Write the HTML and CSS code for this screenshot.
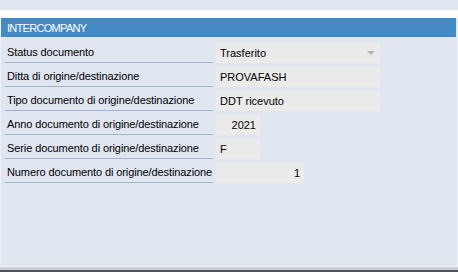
FILE: index.html
```html
<!DOCTYPE html>
<html lang="it">

<head>
    <meta charset="UTF-8">
    <meta name="viewport" content="width=device-width, initial-scale=1.0">
    <title>Intercompany</title>
    <link rel="stylesheet" href="styles.css">
</head>

<body>
    <div class="barra-top"></div>

    <div class="pannello">
        <div class="intestazione">INTERCOMPANY</div>

        <div class="campi">
            <div class="riga">
                <div class="etichetta">Status documento</div>
                <div class="valore lungo combo">
                    <span>Trasferito</span>
                    <span class="freccia"></span>
                </div>
            </div>
            <div class="riga">
                <div class="etichetta">Ditta di origine/destinazione</div>
                <div class="valore lungo">PROVAFASH</div>
            </div>
            <div class="riga">
                <div class="etichetta">Tipo documento di origine/destinazione</div>
                <div class="valore lungo">DDT ricevuto</div>
            </div>
            <div class="riga">
                <div class="etichetta">Anno documento di origine/destinazione</div>
                <div class="valore corto numero">2021</div>
            </div>
            <div class="riga">
                <div class="etichetta">Serie documento di origine/destinazione</div>
                <div class="valore corto">F</div>
            </div>
            <div class="riga">
                <div class="etichetta">Numero documento di origine/destinazione</div>
                <div class="valore medio numero">1</div>
            </div>
        </div>
    </div>

    <div class="barra-bottom"></div>
</body>

</html>
```

FILE: styles.css
```css
html,
body {
    height: 100%;
}

body {
    margin: 0;
    padding: 0;
    font-family: Tahoma, "Liberation Sans", Arial, sans-serif;
    font-size: 11px;
    background-color: #dfe6f0;
    display: flex;
    flex-direction: column;
    color: #000;
}

.barra-top {
    height: 10px;
    background-color: #dfe6f0;
    border-bottom: 8px solid #ffffff;
    flex-shrink: 0;
}

.pannello {
    flex: 1;
    display: flex;
    flex-direction: column;
    background-color: #dfe6f0;
    border-left: 1px solid #eef2f8;
    border-right: 1px solid #eef2f8;
    border-bottom: 1px solid #f4f6fa;
}

.intestazione {
    height: 19px;
    line-height: 20px;
    background-color: #4389c3;
    color: #ffffff;
    padding-left: 6px;
    margin-right: 1px;
    letter-spacing: -0.7px;
}

.campi {
    display: flex;
    flex-direction: column;
    gap: 4px;
    padding-top: 6px;
    padding-left: 4px;
}

.riga {
    display: flex;
    gap: 3px;
    height: 20px;
}

.etichetta {
    width: 206px;
    height: 19px;
    line-height: 19px;
    padding-left: 2px;
    border-bottom: 1px solid #9db4d6;
    white-space: nowrap;
    letter-spacing: -0.1px;
}

.valore {
    height: 20px;
    line-height: 20px;
    background-color: #ebebeb;
    padding: 0 4px;
    box-sizing: border-box;
    white-space: nowrap;
}

.lungo {
    width: 164px;
}

.medio {
    width: 88px;
}

.corto {
    width: 44px;
}

.numero {
    text-align: right;
}

.combo {
    display: flex;
    justify-content: space-between;
    align-items: center;
}

.freccia {
    width: 0;
    height: 0;
    border-left: 4px solid transparent;
    border-right: 4px solid transparent;
    border-top: 4px solid #b4b4b4;
    margin-right: 1px;
}

.barra-bottom {
    height: 5px;
    flex-shrink: 0;
    background: linear-gradient(#cdcdd6 0, #cdcdd6 3px, #505058 3px);
}
```
